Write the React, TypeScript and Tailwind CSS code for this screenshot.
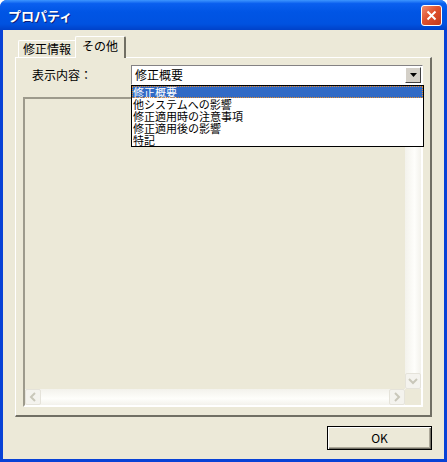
import React from "react";

const jp = { fontFamily: '"Noto Sans CJK JP", "Noto Sans", sans-serif' };

const items = ["修正概要", "他システムへの影響", "修正適用時の注意事項", "修正適用後の影響", "特記"];

function Chevron({ dir }: { dir: "down" | "left" | "right" }) {
    const d =
        dir === "down" ? "M3 5 L7 9 L11 5" : dir === "left" ? "M9 3 L5 7 L9 11" : "M5 3 L9 7 L5 11";
    return (
        <svg width="14" height="14" viewBox="0 0 14 14">
            <path d={d} fill="none" stroke="#C9C7BA" strokeWidth="2" />
        </svg>
    );
}

export default function App() {
    return (
        <div className="w-[447px] h-[462px] flex flex-col bg-[#0842D6] rounded-t-[7px] overflow-hidden" style={jp}>
            {/* タイトルバー */}
            <div className="h-[30px] shrink-0 flex items-center justify-between pl-[8px] pr-[5px] bg-[linear-gradient(180deg,#3D95FF_0%,#0A5FEF_12%,#0055E5_40%,#0052E0_80%,#0041C8_100%)]">
                <span className="text-white text-[13px] font-bold leading-none [text-shadow:1px_1px_0_#0A1E7A]">プロパティ</span>
                <div className="w-[21px] h-[21px] rounded-[3px] border border-white bg-[linear-gradient(135deg,#F08D70_0%,#E0512E_45%,#C5391A_100%)] flex items-center justify-center">
                    <svg width="11" height="11" viewBox="0 0 11 11">
                        <path d="M1.5 1.5 L9.5 9.5 M9.5 1.5 L1.5 9.5" stroke="white" strokeWidth="2" />
                    </svg>
                </div>
            </div>

            {/* 本体 */}
            <div className="flex-1 mx-[3px] mb-[3px] bg-[#ECE9D8] flex flex-col px-[12px] pt-[6px]">
                {/* タブ */}
                <div className="h-[21px] flex items-end pl-[3px] text-[12px] text-black">
                    <div className="h-[17px] w-[57px] flex items-center justify-center border-t border-l border-white rounded-tl-[2px] leading-none">
                        修正情報
                    </div>
                    <div className="h-[22px] w-[51px] -mb-[1px] flex items-center justify-center bg-[#ECE9D8] border-t border-l border-white border-r-2 border-r-[#716F64] rounded-t-[2px] leading-none relative z-10 pb-[3px]">
                        その他
                    </div>
                </div>

                {/* タブパネル */}
                <div className="relative w-[417px] h-[360px] border border-t-white border-l-white border-b-2 border-r-2 border-b-[#716F64] border-r-[#716F64] bg-[#ECE9D8] pt-[7px] px-[7px]">
                    <div className="flex items-center h-[20px]">
                        <span className="w-[108px] pl-[9px] text-[12px] leading-none">表示内容：</span>
                        <div className="w-[292px] h-[20px] flex items-center bg-white border border-t-[#848284] border-l-[#848284] border-b-white border-r-white">
                            <span className="flex-1 pl-[3px] text-[12px] leading-none">修正概要</span>
                            <div className="w-[16px] h-[16px] mr-[1px] bg-[#D4D0C8] border border-t-white border-l-white border-b-[#404040] border-r-[#404040] flex items-center justify-center">
                                <svg width="7" height="4" viewBox="0 0 7 4">
                                    <path d="M0 0 H7 L3.5 4 Z" fill="black" />
                                </svg>
                            </div>
                        </div>
                    </div>

                    {/* テキスト領域（無効） */}
                    <div className="mt-[12px] w-[400px] h-[310px] border-2 border-t-[#9D9A8C] border-l-[#9D9A8C] border-b-white border-r-white flex flex-col">
                        <div className="flex-1 flex">
                            <div className="flex-1" />
                            <div className="w-[16px] flex flex-col justify-end bg-[linear-gradient(90deg,#F3F2EC,#FEFEFB_60%,#F3F2EC)]">
                                <div className="h-[16px] border border-[#E5E3DA] bg-[#F4F3EE] rounded-[2px] flex items-center justify-center">
                                    <Chevron dir="down" />
                                </div>
                            </div>
                        </div>
                        <div className="h-[16px] flex">
                            <div className="flex-1 flex bg-[linear-gradient(180deg,#F3F2EC,#FEFEFB_60%,#F3F2EC)]">
                                <div className="w-[16px] border border-[#E5E3DA] bg-[#F4F3EE] rounded-[2px] flex items-center justify-center">
                                    <Chevron dir="left" />
                                </div>
                                <div className="flex-1" />
                                <div className="w-[16px] border border-[#E5E3DA] bg-[#F4F3EE] rounded-[2px] flex items-center justify-center">
                                    <Chevron dir="right" />
                                </div>
                            </div>
                            <div className="w-[16px]" />
                        </div>
                    </div>

                    {/* ドロップダウンリスト */}
                    <div className="absolute left-[115px] top-[27px] w-[293px] bg-white border border-black z-20 text-[11px]">
                        {items.map((item, i) => (
                            <div
                                key={item}
                                className={
                                    i === 0
                                        ? "h-[12px] leading-[12px] pl-[1px] bg-[#316AC5] text-white outline-1 outline-dotted outline-[#E68B2C] -outline-offset-1"
                                        : "h-[12px] leading-[12px] pl-[1px] text-black"
                                }
                            >
                                {item}
                            </div>
                        ))}
                    </div>
                </div>

                {/* ボタン */}
                <div className="flex justify-end mt-[9px]">
                    <button className="w-[105px] h-[24px] border border-black bg-[#ECE9D8] shadow-[inset_1px_1px_0_#FFFFFF,inset_-1px_-1px_0_#716F64,inset_-2px_-2px_0_#ACA899] text-[12px] leading-none">
                        OK
                    </button>
                </div>
            </div>
        </div>
    );
}
